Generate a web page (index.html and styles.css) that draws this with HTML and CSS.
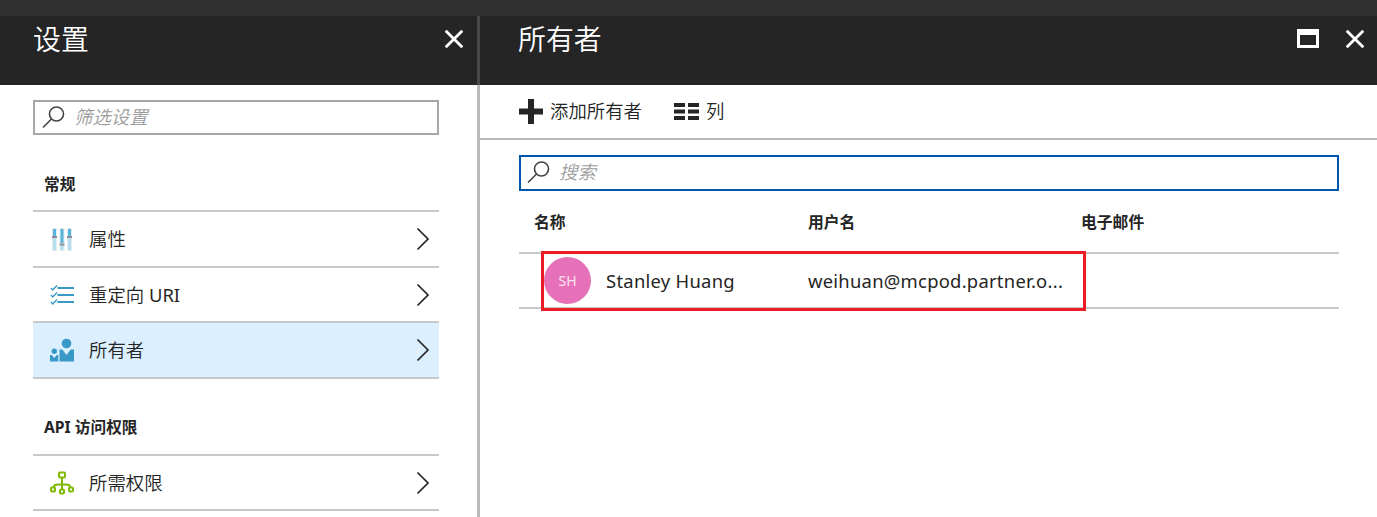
FILE: index.html
```html
<!DOCTYPE html>
<html lang="zh-CN">
<head>
<meta charset="utf-8">
<title>所有者</title>
<link rel="stylesheet" href="styles.css">
</head>
<body>
<div class="topbar"></div>
<main class="blades">
  <section class="blade settings">
    <header class="blade-header">
      <h1 class="title">设置</h1>
      <svg class="close" width="20" height="20" viewBox="0 0 20 20"><path d="M1.7 1.7 18.3 18.3M18.3 1.7 1.7 18.3"/></svg>
    </header>
    <div class="settings-body">
      <div class="search filter">
        <svg class="magnifier" width="23" height="23" viewBox="0 0 23 23"><circle cx="14.5" cy="8" r="7"/><path d="M9.5 13 1 21.5"/></svg>
        <span class="hint">筛选设置</span>
      </div>
      <h2 class="group">常规</h2>
      <ul class="menu">
        <li class="item">
          <svg class="icon" width="24" height="24" viewBox="0 0 24 24">
            <path fill="#e2edf1" d="M2 1h5v23H2zM9.500 1h5v23h-5zM17 1h5v23h-5z"/>
            <path fill="#b7deef" d="M3 10h3v13H3zM10.500 18h3v5h-3zM18 10h3v13h-3z"/>
            <path fill="#59b4d9" d="M3 2h3v7H3zM10.500 2h3v14h-3zM18 2h3v7h-3z"/>
            <path fill="#8a9093" d="M2 9h5v2H2zM9.500 16.500h5v2h-5zM17 9h5v2h-5z"/>
          </svg>
          <span class="label">属性</span>
          <svg class="chevron" width="14" height="24" viewBox="0 0 14 24"><path d="M1.500 1.500 12 12 1.500 22.500"/></svg>
        </li>
        <li class="item short">
          <svg class="icon" width="24" height="24" viewBox="0 0 24 24" fill="none" stroke="#3999c6">
            <path stroke-width="2" d="M7.500 5H24M7.500 12H24M7.500 19H24"/>
            <path stroke-width="1.400" d="m1 5 1.700 2L7 2.500M1 12l1.700 2L7 9.500M1 19l1.700 2L7 16.500"/>
          </svg>
          <span class="label">重定向 <span class="latin">URI</span></span>
          <svg class="chevron" width="14" height="24" viewBox="0 0 14 24"><path d="M1.500 1.500 12 12 1.500 22.500"/></svg>
        </li>
        <li class="item selected">
          <svg class="icon" width="24" height="24" viewBox="0 0 24 24" fill="#3999c6">
            <circle cx="16.500" cy="5.500" r="4.800"/><path d="M9.500 11.500h2.800l4.200 5.500 4.200-5.500H24v12H9.500z"/>
            <circle cx="4.300" cy="13.200" r="2.700"/><path d="M0 17h1.800l2.500 3L6.800 17h1.500v6.500H0z"/>
          </svg>
          <span class="label">所有者</span>
          <svg class="chevron" width="14" height="24" viewBox="0 0 14 24"><path d="M1.500 1.500 12 12 1.500 22.500"/></svg>
        </li>
      </ul>
      <h2 class="group api">API 访问权限</h2>
      <ul class="menu">
        <li class="item short">
          <svg class="icon" width="24" height="24" viewBox="0 0 24 24" fill="none" stroke="#7fba00" stroke-width="2">
            <rect x="9" y="1.500" width="6" height="5" rx="1"/><rect x="1" y="16.500" width="4" height="4" rx="1"/><rect x="10" y="18.500" width="4" height="4" rx="1"/><rect x="19" y="16.500" width="4" height="4" rx="1"/>
            <path d="M12 7v11M3.500 16.500C4.500 13 6 13.800 12 13.300 18 13.800 19.500 13 20.500 16.500"/>
          </svg>
          <span class="label">所需权限</span>
          <svg class="chevron" width="14" height="24" viewBox="0 0 14 24"><path d="M1.500 1.500 12 12 1.500 22.500"/></svg>
        </li>
      </ul>
    </div>
  </section>
  <div class="divider"></div>
  <section class="blade owners">
    <header class="blade-header">
      <h1 class="title">所有者</h1>
      <svg class="maximize" width="22" height="19" viewBox="0 0 22 19"><path fill="#fff" fill-rule="evenodd" d="M0 0h22v19H0zM3 6h16v10H3z"/></svg>
      <svg class="close" width="20" height="20" viewBox="0 0 20 20"><path d="M1.700 1.700 18.300 18.300M18.300 1.700 1.700 18.300"/></svg>
    </header>
    <div class="toolbar">
      <svg class="plus" width="24" height="25" viewBox="0 0 24 25"><path fill="#252525" d="M9 0h6v9.500h9v6h-9V25H9v-9.500H0v-6h9z"/></svg>
      <span class="command add">添加所有者</span>
      <svg class="columns" width="25" height="17" viewBox="0 0 25 17"><path fill="#252525" d="M0 0h11v4H0zM14 0h11v4H14zM0 6.500h11v4H0zM14 6.500h11v4H14zM0 13h11v4H0zM14 13h11v4H14z"/></svg>
      <span class="command">列</span>
    </div>
    <div class="owners-body">
      <div class="search focused">
        <svg class="magnifier" width="23" height="23" viewBox="0 0 23 23"><circle cx="14.500" cy="8" r="7"/><path d="M9.500 13 1 21.500"/></svg>
        <span class="hint">搜索</span>
      </div>
      <div class="row head"><span>名称</span><span>用户名</span><span>电子邮件</span></div>
      <div class="row person">
        <div class="who"><span class="avatar">SH</span><span class="name">Stanley Huang</span></div>
        <span class="user">weihuan@mcpod.partner.o...</span>
        <span></span>
        <div class="highlight"></div>
      </div>
    </div>
  </section>
</main>
</body>
</html>
```
FILE: styles.css
```css
* { box-sizing: border-box; }
body {
  margin: 0;
  height: 517px;
  overflow: hidden;
  display: flex;
  flex-direction: column;
  background: #fff;
  color: #252525;
  font-family: "Noto Sans", "Noto Sans CJK SC", sans-serif;
  font-size: 18.4px;
}
h1, h2, ul { margin: 0; padding: 0; }
svg { display: block; flex: none; }
span { white-space: nowrap; }
.topbar { height: 16px; flex: none; background: #303030; }
.blades { display: flex; flex: 1; min-height: 0; }
.settings { width: 477px; flex: none; }
.owners { flex: 1; }
.divider { width: 3px; background: linear-gradient(#484848 69px, #b9b9b9 69px); }
.blade-header {
  height: 69px;
  display: flex;
  align-items: flex-start;
  background: #252525;
  color: #fff;
}
.title {
  flex: 1;
  font-size: 27.9px;
  font-weight: 350;
  line-height: 40px;
  margin-top: 3px;
}
.settings .blade-header { padding: 0 13px 0 33px; }
.owners .blade-header { padding: 0 12px 0 38px; }
.close { margin-top: 13px; fill: none; stroke: #fff; stroke-width: 2.8; }
.maximize { margin: 13px 26px 0 0; }
.settings-body { padding: 15px 38px 0 33px; }
.search { display: flex; align-items: flex-start; border: 2px solid #a6a6a6; }
.filter { height: 35px; padding: 4px 0 0 7px; }
.focused { height: 36px; padding: 4px 0 0 6px; border-color: #0058ad; }
.magnifier { fill: none; stroke: #444; stroke-width: 1.6; }
.hint { margin-left: 9px; line-height: 21px; font-style: italic; font-weight: 350; color: #9c9c9c; }
.focused .hint { line-height: 22px; }
.group { height: 75px; padding: 36px 0 0 11px; font-size: 15.7px; line-height: 26px; font-weight: 700; }
.api { padding-top: 35px; }
.menu { list-style: none; border-top: 2px solid #c8c8c8; }
.item { height: 56px; display: flex; align-items: center; padding: 0 9px 0 17px; border-bottom: 2px solid #c8c8c8; }
.short { height: 55px; }
.selected { background: #dbeffe; }
.label { flex: 1; margin-left: 15px; padding-bottom: 2px; font-weight: 350; }
.latin { font-weight: 400; }
.chevron { fill: none; stroke: #252525; stroke-width: 1.7; }
.toolbar { height: 55px; display: flex; align-items: center; padding: 0 0 0 39px; border-bottom: 2px solid #b9b9b9; }
.command { margin-left: 7px; padding-bottom: 3px; font-weight: 350; }
.add { margin-right: 32px; }
.owners-body { padding: 15px 38px 0 39px; }
.row { display: grid; grid-template-columns: 274px 273px 1fr; padding-left: 15px; border-bottom: 2px solid #c8c8c8; align-items: center; }
.head { height: 63px; font-size: 15.8px; font-weight: 700; }
.person { position: relative; height: 55px; }
.who { display: flex; align-items: center; padding-left: 10px; }
.avatar { width: 47px; height: 47px; border-radius: 50%; background: #e671b8; color: #f9e4f1; font-size: 14px; line-height: 47px; text-align: center; }
.name { margin-left: 15px; letter-spacing: 0.28px; }
.user { letter-spacing: 0.26px; }
.highlight { position: absolute; left: 22px; top: -3px; width: 545px; height: 60px; border: 3px solid #ed1c24; }
```
